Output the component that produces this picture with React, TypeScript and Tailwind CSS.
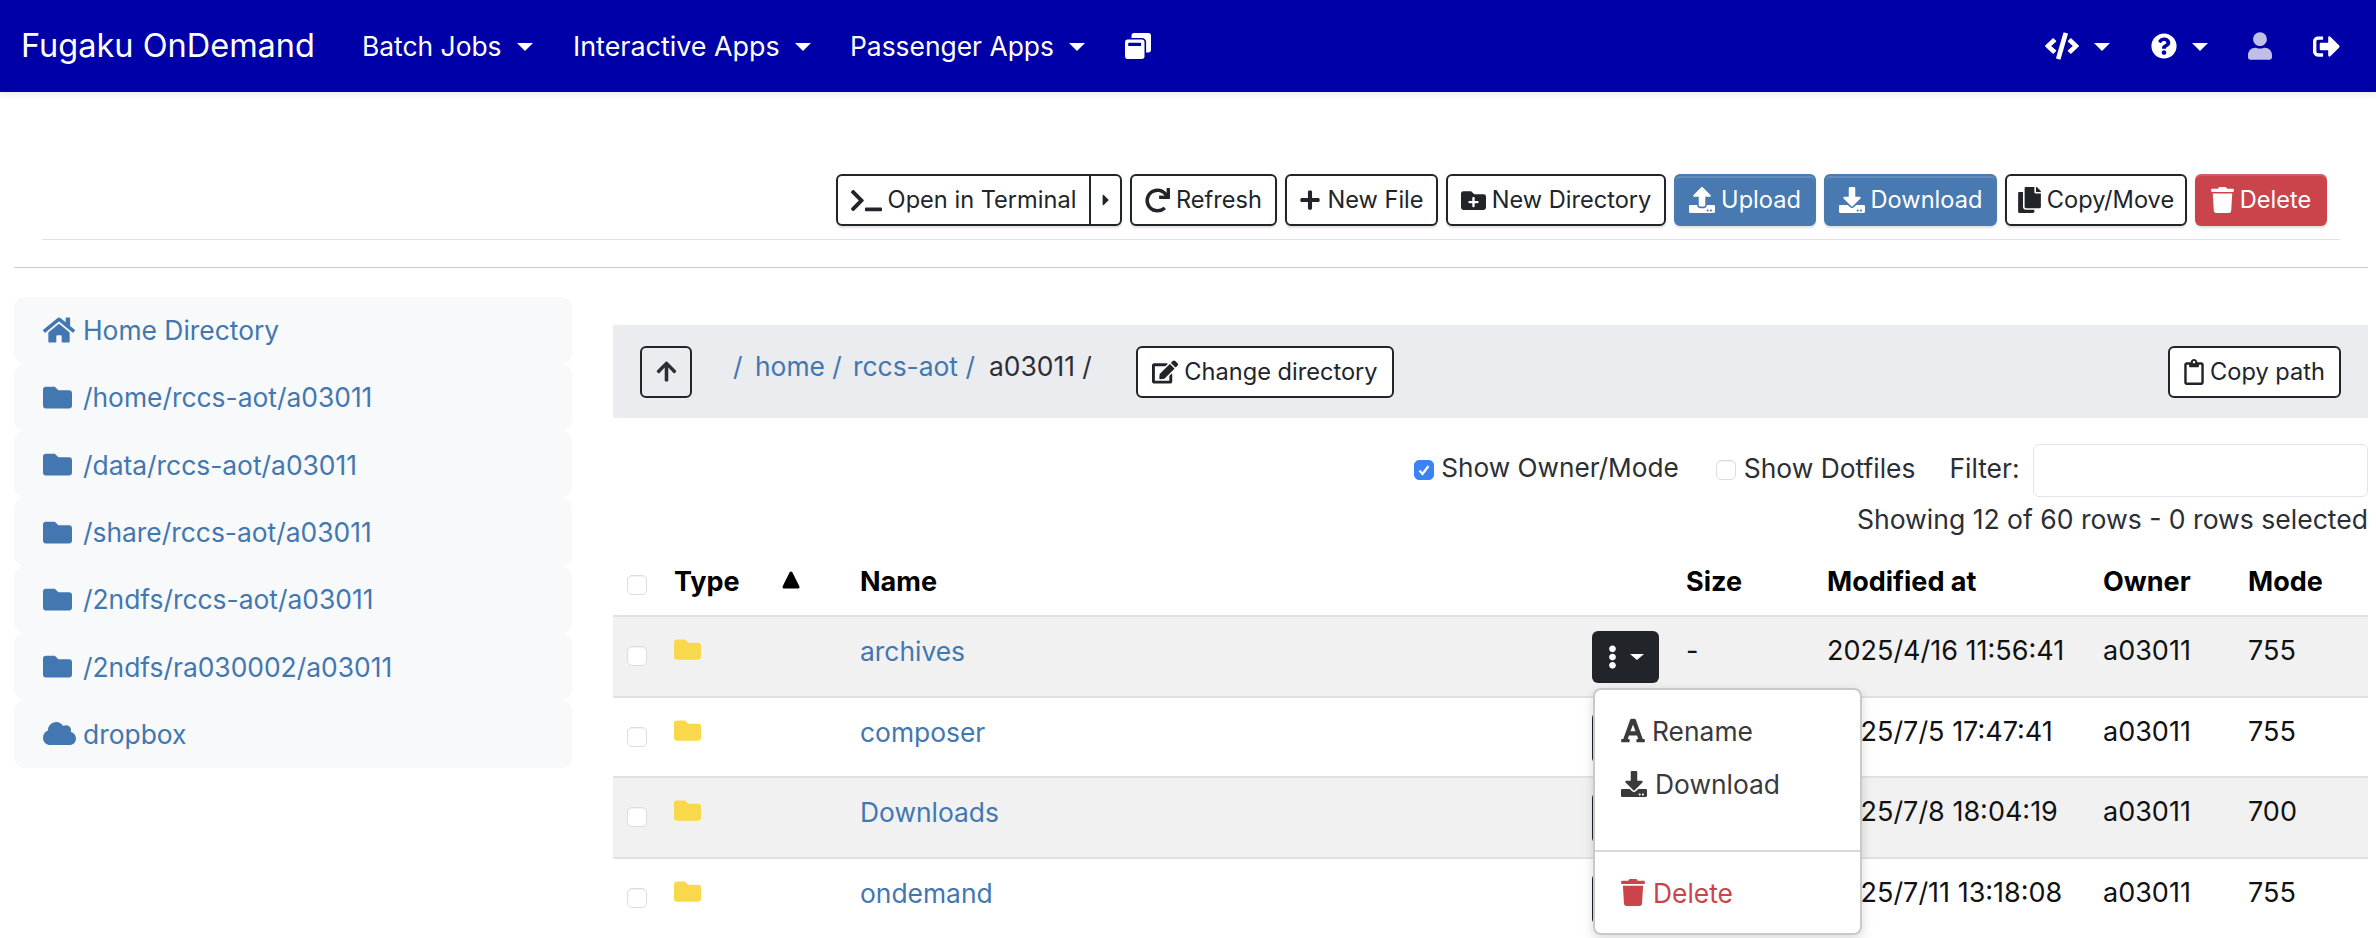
import React from "react";
import {
  FaHome, FaFolder, FaCloud, FaTerminal, FaRedo, FaPlus, FaFolderPlus, FaUpload, FaDownload,
  FaCopy, FaTrash, FaEdit, FaRegClipboard, FaArrowUp, FaFont, FaEllipsisV, FaWindowRestore,
  FaCode, FaQuestionCircle, FaUser, FaSignOutAlt, FaCaretRight,
} from "react-icons/fa";

const Caret = ({ className = "" }: { className?: string }) => (
  <span className={"inline-block w-0 h-0 border-x-[8px] border-x-transparent border-t-[8px] border-t-current " + className} />
);

const NavItem = ({ label, w, size = "text-[26.4px]" }: { label: string; w: string; size?: string }) => (
  <div className={"flex items-center text-white " + w + " " + size}>
    <span>{label}</span>
    <Caret className="ml-[15px] mt-[1px]" />
  </div>
);

const toolBtn = "flex items-center justify-center gap-[6px] h-[52px] rounded-[6px] border-2 border-[#212529] bg-white text-[#212529] text-[23.6px] shadow-[0_2px_2px_rgba(0,0,0,0.12)]";
const blueBtn = "flex items-center justify-center gap-[6px] h-[52px] rounded-[6px] border-2 border-[#4a7ab0] bg-[#487ab1] text-white text-[23.6px] shadow-[inset_0_2px_0_rgba(255,255,255,0.15),0_2px_2px_rgba(0,0,0,0.12)]";

const sidebar: [React.ReactNode, string][] = [
  [<FaHome className="w-[32px] h-[32px]" />, "Home Directory"],
  [<FaFolder className="w-[29px] h-[29px]" />, "/home/rccs-aot/a03011"],
  [<FaFolder className="w-[29px] h-[29px]" />, "/data/rccs-aot/a03011"],
  [<FaFolder className="w-[29px] h-[29px]" />, "/share/rccs-aot/a03011"],
  [<FaFolder className="w-[29px] h-[29px]" />, "/2ndfs/rccs-aot/a03011"],
  [<FaFolder className="w-[29px] h-[29px]" />, "/2ndfs/ra030002/a03011"],
  [<FaCloud className="w-[33px] h-[33px]" />, "dropbox"],
];

const rows = [
  ["archives", "-", "2025/4/16 11:56:41", "a03011", "755"],
  ["composer", "", "2025/7/5 17:47:41", "a03011", "755"],
  ["Downloads", "", "2025/7/8 18:04:19", "a03011", "700"],
  ["ondemand", "", "2025/7/11 13:18:08", "a03011", "755"],
];

const Check = ({ on }: { on?: boolean }) => (
  <span className={"inline-flex items-center justify-center w-[20px] h-[20px] rounded-[5px] border-[1.5px] shrink-0 " + (on ? "bg-[#3b82f6] border-[#3b82f6]" : "bg-white border-[#dcdde0] shadow-[inset_0_1px_1px_rgba(0,0,0,0.06)]")}>
    {on && (
      <svg viewBox="0 0 16 16" className="w-[16px] h-[16px]">
        <path d="M3.5 8.5 L6.5 12 L12.5 4" fill="none" stroke="white" strokeWidth="2.2" />
      </svg>
    )}
  </span>
);

export default function App() {
  return (
    <div className="w-[2376px] h-[938px] overflow-hidden bg-white text-[26.4px] leading-[36px] text-[#2b2f33] font-['Inter','Liberation_Sans',sans-serif]">
      <nav className="h-[92px] bg-[#0000a8] flex items-center pl-[21px] pr-[36px] text-white shadow-[0_3px_6px_rgba(0,0,0,0.08)]">
        <div className="text-[32.5px] w-[341px]">Fugaku OnDemand</div>
        <NavItem label="Batch Jobs" w="w-[211px]" />
        <NavItem label="Interactive Apps" w="w-[277px]" size="text-[26.9px]" />
        <NavItem label="Passenger Apps" w="w-[274px]" />
        <FaWindowRestore className="w-[28px] h-[26px]" />
        <div className="flex-1" />
        <FaCode className="w-[34px] h-[28px]" />
        <Caret className="ml-[15px] mt-[1px]" />
        <FaQuestionCircle className="w-[26px] h-[26px] ml-[41px]" />
        <Caret className="ml-[15px] mt-[1px]" />
        <FaUser className="w-[24px] h-[28px] ml-[40px] text-white/75" />
        <FaSignOutAlt className="w-[27px] h-[27px] ml-[41px]" />
      </nav>

      <div className="flex justify-end gap-[8px] pt-[82px] pr-[49px]">
        <div className="flex w-[286px] h-[52px] rounded-[6px] border-2 border-[#212529] text-[#212529] text-[23.6px] shadow-[0_2px_2px_rgba(0,0,0,0.12)]">
          <div className="flex-1 flex items-center justify-center gap-[6px] border-r-2 border-[#212529]">
            <FaTerminal className="w-[31px] h-[25px]" />
            <span>Open in Terminal</span>
          </div>
          <div className="w-[29px] flex items-center justify-center">
            <FaCaretRight className="w-[12px] h-[18px]" />
          </div>
        </div>
        <div className={toolBtn + " w-[147px]"}><FaRedo className="w-[25px] h-[25px]" /><span>Refresh</span></div>
        <div className={toolBtn + " w-[153px]"}><FaPlus className="w-[22px] h-[22px]" /><span>New File</span></div>
        <div className={toolBtn + " w-[220px]"}><FaFolderPlus className="w-[25px] h-[25px]" /><span>New Directory</span></div>
        <div className={blueBtn + " w-[142px]"}><FaUpload className="w-[26px] h-[26px]" /><span>Upload</span></div>
        <div className={blueBtn + " w-[173px]"}><FaDownload className="w-[26px] h-[26px]" /><span>Download</span></div>
        <div className={toolBtn + " w-[182px]"}><FaCopy className="w-[23px] h-[26px]" /><span>Copy/Move</span></div>
        <div className="flex items-center justify-center gap-[6px] h-[52px] w-[132px] rounded-[6px] bg-[#cc444b] text-white text-[23.6px] shadow-[inset_0_2px_0_rgba(255,255,255,0.15),0_2px_2px_rgba(0,0,0,0.12)]">
          <FaTrash className="w-[23px] h-[26px]" /><span>Delete</span>
        </div>
      </div>

      <div className="ml-[42px] mr-[36px] mt-[13px] border-t-[1.5px] border-[#dee2e6]" />
      <div className="ml-[14px] mr-[8px] mt-[27px] border-t-[1.5px] border-[#cccccc]" />

      <div className="flex pl-[14px] pr-[8px] pt-[28.5px]">
        <div className="w-[558px] shrink-0">
          {sidebar.map(([icon, label]) => (
            <div key={label} className="h-[67.3px] flex items-center bg-[#f8f9fa] rounded-[10px] text-[#4277b1]">
              <div className="w-[69px] flex pl-[29px]">{icon}</div>
              <span>{label}</span>
            </div>
          ))}
        </div>

        <div className="ml-[41px] flex-1 min-w-0 relative">
          <div className="h-[93px] mt-[28.5px] bg-[#ebecf0] flex items-center pl-[27px] pr-[27px]">
            <div className="w-[52px] h-[52px] rounded-[6px] border-2 border-[#212529] flex items-center justify-center">
              <FaArrowUp className="w-[23px] h-[23px]" />
            </div>
            <div className="flex items-center pl-[41px] w-[444px] mb-[11px]">
              <span className="text-[#4277b1] w-[22px]">/</span>
              <span className="text-[#4277b1] w-[98px]">home /</span>
              <span className="text-[#4277b1] w-[136px]">rccs-aot /</span>
              <span>a03011 /</span>
            </div>
            <div className={toolBtn + " w-[258px] shadow-none"}>
              <FaEdit className="w-[26px] h-[24px]" /><span>Change directory</span>
            </div>
            <div className="flex-1" />
            <div className={toolBtn + " w-[173px] shadow-none"}>
              <FaRegClipboard className="w-[20px] h-[26px]" /><span>Copy path</span>
            </div>
          </div>

          <div className="flex items-center justify-end mt-[25.5px] h-[53px]">
            <Check on />
            <span className="ml-[7px] mr-[37px] relative -top-[2px] text-[26.2px]">Show Owner/Mode</span>
            <Check />
            <span className="ml-[8px] mr-[34px] relative -top-[2px]">Show Dotfiles</span>
            <span className="mr-[13.5px] relative -top-[2px]">Filter:</span>
            <div className="w-[335px] h-[53px] rounded-[6px] border-[1.5px] border-[#e1e4e8]" />
          </div>
          <div className="text-right mt-[4.5px] h-[36px] text-[26.55px]">Showing 12 of 60 rows - 0 rows selected</div>

          <table className="table-fixed w-full mt-[9px] border-collapse">
            <colgroup>
              <col className="w-[61px]" />
              <col className="w-[186px]" />
              <col className="w-[732px]" />
              <col className="w-[94px]" />
              <col className="w-[141px]" />
              <col className="w-[276px]" />
              <col className="w-[145px]" />
              <col className="w-[120px]" />
            </colgroup>
            <thead>
              <tr className="h-[70px] border-b-2 border-[#dee2e6] text-black text-left text-[27px]">
                <th className="pl-[14px] font-normal"><span className="inline-block mt-[10px]"><Check /></span></th>
                <th className="font-bold pt-[2px]">
                  <div className="flex items-center justify-between pr-[60px]">
                    <span>Type</span>
                    <svg viewBox="0 0 18 18" className="w-[18px] h-[18px] mb-[3px]"><path d="M9 2 L16 16 L2 16 Z" fill="black" stroke="black" strokeWidth="3" strokeLinejoin="round" /></svg>
                  </div>
                </th>
                <th className="font-bold pt-[2px]">Name</th>
                <th />
                <th className="font-bold pt-[2px]">Size</th>
                <th className="font-bold pt-[2px]">Modified at</th>
                <th className="font-bold pt-[2px]">Owner</th>
                <th className="font-bold pt-[2px]">Mode</th>
              </tr>
            </thead>
            <tbody>
              {rows.map((r, i) => (
                <tr key={r[0]} className={"h-[80.7px] border-b-2 border-[#dee2e6] align-top text-[#111111] " + (i % 2 === 0 ? "bg-[#f1f1f2]" : "bg-white")}>
                  <td className="pl-[14px] pt-[21px]"><Check /></td>
                  <td className="pt-[19px]"><FaFolder className="w-[27px] h-[27px] text-[#fad84c]" /></td>
                  <td className="pt-[16px] text-[#4277b1]">{r[0]}</td>
                  <td className="pt-[14px]">
                    <div className="w-[67px] h-[52px] rounded-[6px] bg-[#212529] text-white flex items-center justify-center gap-[13px]">
                      <FaEllipsisV className="w-[9px] h-[24px]" />
                      <Caret className="!border-x-[7px] !border-t-[6px]" />
                    </div>
                  </td>
                  <td className="pt-[16px] text-[27px]">{r[1]}</td>
                  <td className="pt-[16px] text-[27px]">{r[2]}</td>
                  <td className="pt-[16px] text-[27px]">{r[3]}</td>
                  <td className="pt-[16px] text-[27px]">{r[4]}</td>
                </tr>
              ))}
            </tbody>
          </table>

          <div className="absolute left-[980px] top-[391px] w-[269px] h-[247px] bg-white rounded-[8px] border-2 border-[#c8c9cb] shadow-[0_4px_12px_rgba(0,0,0,0.15)] text-[#3a3a3a]">
            <div className="flex items-center h-[36px] mt-[23px] pl-[26px] gap-[7px]">
              <FaFont className="w-[24px] h-[27px]" /><span>Rename</span>
            </div>
            <div className="flex items-center h-[36px] mt-[17px] pl-[26px] gap-[8px]">
              <FaDownload className="w-[26px] h-[26px]" /><span>Download</span>
            </div>
            <div className="border-t-2 border-[#d6d8da] mt-[48px]" />
            <div className="flex items-center h-[36px] mt-[23px] pl-[26px] gap-[8px] text-[#cc444b]">
              <FaTrash className="w-[24px] h-[27px]" /><span>Delete</span>
            </div>
          </div>
        </div>
      </div>
    </div>
  );
}
